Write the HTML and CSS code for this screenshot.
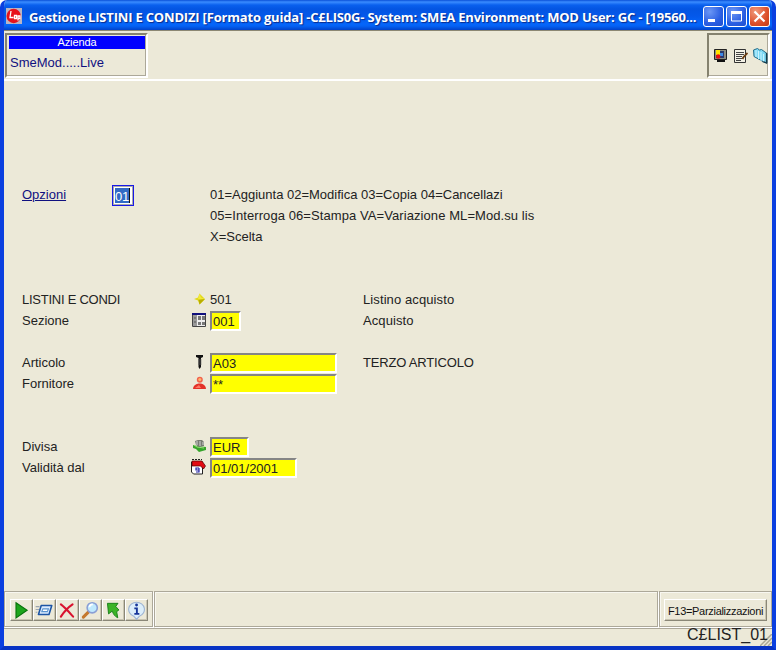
FILE: index.html
```html
<!DOCTYPE html>
<html lang="it">
<head>
<meta charset="utf-8">
<title>Gestione LISTINI E CONDIZI</title>
<link rel="stylesheet" href="styles.css">
</head>
<body>
<div class="window">
  <header class="titlebar">
    <svg class="app-icon" width="16" height="16" viewBox="0 0 16 16"><rect width="16" height="16" fill="#b9b5c4"/><circle cx="7.700" cy="8" r="7.200" fill="#e8121c"/><path d="M5 3L4 9.500h3.500M8.500 7.500h2v3h-2zM12 12.500V8h2v2.500h-2" stroke="#fff" stroke-width="1.300" fill="none"/></svg>
    <h1 class="title">Gestione LISTINI E CONDIZI [Formato guida] -C£LIS0G- System: SMEA Environment: MOD User: GC - [19560...</h1>
    <div class="controls">
      <span class="control"><svg width="19" height="19"><path d="M4 12h7v3H4z" fill="#fff"/></svg></span>
      <span class="control"><svg width="19" height="19"><path d="M4.500 5h10v9h-10z" fill="none" stroke="#fff"/><path d="M4 4h11v3H4z" fill="#fff"/></svg></span>
      <span class="control close"><svg width="19" height="19"><path d="M4.500 4.500l10 10M14.500 4.500l-10 10" stroke="#fff" stroke-width="2.200"/></svg></span>
    </div>
  </header>
  <section class="topbar">
    <div class="company">
      <div class="company-head">Azienda</div>
      <div class="company-name">SmeMod.....Live</div>
    </div>
    <div class="tools">
      <svg width="15" height="16" viewBox="0 0 15 16"><path d="M1.500 1.500h12v10h-12z" fill="#8b8c80" stroke="#222"/><path d="M3 3h8v7H3z" fill="#2d3b6c"/><path d="M3 2h4v5H3z" fill="#ffe600"/><path d="M7 5h3v3H7z" fill="#3d8be6"/><circle cx="5.200" cy="8.500" r="2.200" fill="#e81010"/><path d="M4 12h8v2H4z" fill="#111"/></svg>
      <svg width="15" height="16" viewBox="0 0 15 16"><path d="M1.500 1.500h11v13h-11z" fill="#f4f2e6" stroke="#333"/><path d="M3 4.500h8M3 6.500h8M3 8.500h6M3 10.500h6M3 12.500h5" stroke="#444"/><path d="M14.500 5l-4 4-1 2" stroke="#6b3d12" stroke-width="1.800" fill="none"/></svg>
      <svg width="15" height="16" viewBox="0 0 15 16"><path d="M.5 2l4-1.500 2 1.500 2-.5 5.500 4v9.500l-4-1.500-9-5z" fill="#7fd9f5" stroke="#246b87"/><path d="M3 2v7M5.500 3v8M8 4v9M10.500 6v8" stroke="#c9f3ff" fill="none"/><path d="M13.500 5v10l-4-1.500" stroke="#173c4d" stroke-width="1.300" fill="none"/></svg>
    </div>
  </section>
  <main class="form">
    <a class="label link">Opzioni</a>
    <div class="option"><span class="option-value">01</span></div>
    <div class="legend"><div>01=Aggiunta 02=Modifica 03=Copia 04=Cancellazi</div><div class="wide">05=Interroga 06=Stampa VA=Variazione ML=Mod.su lis</div><div>X=Scelta</div></div>

    <div class="label row6 caps">LISTINI E CONDI</div>
    <div class="icon row6"><svg width="16" height="16" viewBox="0 0 16 16"><path d="M8.500 2.500L14 8l-5.500 5.500-1.500-4L3 8l4-1.500z" fill="#e1d91a"/><path d="M8.500 2.500l1.500 4L14 8H7z" fill="#f2e93c"/><path d="M14 8l-5.500 5.500L7.500 9z" fill="#b9ae00"/></svg></div>
    <div class="value row6">501</div>
    <div class="desc row6">Listino acquisto</div>

    <div class="label row7">Sezione</div>
    <div class="icon row7"><svg width="16" height="16" viewBox="0 0 16 16"><path d="M1.500 1.500h13v13h-13z" fill="#eee" stroke="#444"/><path d="M1 1h14v2H1z" fill="#10107c"/><path d="M2 3h4v11H2z" fill="#999"/><path d="M3 5h2v2H3zM3 9h2v2H3zM7 4h3v4H7zM11 4h3v4h-3zM7 10h3v3H7zM11 10h3v3h-3z" fill="#777"/></svg></div>
    <div class="field w3 row7">001</div>
    <div class="desc row7">Acquisto</div>

    <div class="label row9">Articolo</div>
    <div class="icon row9"><svg width="16" height="16" viewBox="0 0 16 16"><path d="M5 1h7v2l-2 1v9l-1.500 2L7.500 13V4L5 3z" fill="#111"/><path d="M7 6h3.500M7 8h3.500M7 10h3.500" stroke="#555"/></svg></div>
    <div class="field w15 row9">A03</div>
    <div class="desc row9 caps">TERZO ARTICOLO</div>

    <div class="label row10">Fornitore</div>
    <div class="icon row10"><svg width="16" height="16" viewBox="0 0 16 16"><path d="M2 14c0-3 2-4.500 5.500-5.500h2.500C13 9.500 15 11 15 14z" fill="#e33128"/><path d="M4 13l4-3 2 3z" fill="#ff7763"/><circle cx="8.800" cy="4.800" r="3" fill="#f2624b"/><circle cx="8.800" cy="4.500" r="1.500" fill="#ffb46e"/></svg></div>
    <div class="field w15 row10">**</div>

    <div class="label row13">Divisa</div>
    <div class="icon row13"><svg width="16" height="16" viewBox="0 0 16 16"><path d="M2 7l4 1 9 1v3l-7 2-3-3-3-1z" fill="#36a52b"/><path d="M3 7l3 2 7 1" stroke="#9adf78" fill="none"/><path d="M4 3l3-1h4l2 2v4l-5 1-3-2z" fill="#777b72"/><path d="M6 3v4M9 3v5M12 4v3" stroke="#d5d5d5"/></svg></div>
    <div class="field w4 row13">EUR</div>

    <div class="label row14">Validità dal</div>
    <div class="icon row14 calendar"><svg width="16" height="16" viewBox="0 0 16 16"><path d="M1.500 3h11v12h-9l-2-2z" fill="#fff" stroke="#222"/><path d="M2 2h10l3.500 5-2 3-3-3H2z" fill="#e20b13" stroke="#4b0000" stroke-width=".7"/><path d="M2 .5h2M5 .5h2M8 .5h2M11 .5h1" stroke="#222"/><path d="M9 9H6v2h3V9v4H6" stroke="#2424a5" fill="none" stroke-width="1.200"/></svg></div>
    <div class="field w10 row14">01/01/2001</div>
  </main>
  <footer class="commands">
    <div class="panel buttons">
      <span class="btn"><svg width="20" height="20" viewBox="0 0 18 18"><path d="M4.500 2.500l10 6.800-10 6.800z" fill="#1ca51c" stroke="#08720c"/></svg></span>
      <span class="btn"><svg width="20" height="20" viewBox="0 0 18 18"><path d="M6.500 5h9.500l-2.500 8H4z" fill="#dcecff" stroke="#1c55a5" stroke-width="1.400" stroke-linejoin="round"/><path d="M8 8h5l-1 2.500H7z" fill="#fff" stroke="#5a94cf"/><path d="M1.500 6H5M1.500 8.500h3M1.500 11H3" stroke="#9aa4b0"/></svg></span>
      <span class="btn"><svg width="20" height="20" viewBox="0 0 18 18"><path d="M3.500 4c4 3 7 6.500 11 11M14 4C9.500 7 6.500 10.500 3.500 15" stroke="#d9132f" stroke-width="1.900" fill="none" stroke-linecap="round"/></svg></span>
      <span class="btn"><svg width="20" height="20" viewBox="0 0 18 18"><path d="M7.500 11l-4.500 4.500" stroke="#c5792d" stroke-width="2.800" stroke-linecap="round"/><circle cx="11" cy="7" r="4.600" fill="#bfe9fd" stroke="#8a9fd5" stroke-width="1.400"/><path d="M8.500 6.500c0-2 1.500-2.500 3-2.500" stroke="#fff" fill="none" stroke-width="1.500"/></svg></span>
      <span class="btn"><svg width="20" height="20" viewBox="0 0 18 18"><path d="M4 3h9.500l-2 2.800 2.800 3.200-2 1.500 1 5.500c-2.500-1-4-3.200-5-6L5 12.500z" fill="#3cb428" stroke="#127b16" stroke-width=".8"/></svg></span>
      <span class="btn"><svg width="20" height="20" viewBox="0 0 18 18"><path d="M9.500 2a7 6.500 0 0 1 2.500 12.600L9.500 17.500 7 14.600A7 6.500 0 0 1 9.500 2z" fill="#dceefa" stroke="#9db4d2"/><circle cx="9.500" cy="4.500" r="1.300" fill="#17369a"/><path d="M7.500 7.500h2.300v5M7.500 12.500h4.500" stroke="#17369a" stroke-width="1.700" fill="none"/></svg></span>
    </div>
    <div class="panel message"></div>
    <div class="panel keys"><span class="key">F13=Parzializzazioni</span></div>
  </footer>
  <div class="status"><svg class="grip" width="12" height="12"><path d="M0 12L12 0M4 12l8-8M8 12l4-4" stroke="#aaa794" stroke-width="1.500"/></svg><span class="code">C£LIST_01</span></div>
</div>
</body>
</html>
```
FILE: styles.css
```css
* { box-sizing: border-box; }
body { margin: 0; background: #fff; font-family: "Liberation Sans", Arial, sans-serif; font-size: 13px; color: #222; }
svg { display: block; flex: none; }
.window { width: 776px; height: 650px; display: flex; flex-direction: column; background: #ece9d8; border: solid #0a3fe0; border-width: 0 4px 4px; border-bottom-color: #0733c4; border-radius: 7px 7px 0 0; overflow: hidden; white-space: nowrap; }
.titlebar { height: 30px; flex: none; margin: 0 -4px; padding: 2px 6px 0; display: flex; align-items: center; background: linear-gradient(#0a50d8 0, #3a8cff 2px, #0a60ee 5px, #0455e2 9px, #0458ea 16px, #0566fb 24px, #0462f5 26px, #0142c9 30px); }
.title { flex: 1; margin: 1px 0 0 7px; font: bold 13px "Open Sans", "Noto Sans", sans-serif; letter-spacing: -.19px; color: #fff; text-shadow: 1px 1px 1px #0a2a8a; }
.controls { display: flex; gap: 2px; }
.control { width: 21px; height: 21px; border: 1px solid #fff; border-radius: 3px; background: radial-gradient(circle at 30% 25%, #6c97f5, #2a5ee2 60%, #1e4fd0); }
.close { background: radial-gradient(circle at 30% 25%, #f09a7c, #dc4f2a 60%, #c33c14); }
.topbar { height: 51px; flex: none; display: flex; justify-content: space-between; align-items: flex-start; padding: 2px 2px 0 0; border-top: 1px solid #8c8873; border-bottom: 2px solid #fff; }
.company { width: 143px; height: 45px; margin-left: 1px; border: 2px solid; border-color: #85826f #fff #fff #85826f; box-shadow: inset -1px -1px #aca899; padding: 1px 1px 1px 2px; }
.company-head { height: 13px; background: #00f; color: #fff; font-size: 11px; line-height: 13px; text-align: center; letter-spacing: -.1px; }
.company-name { margin: 6px 0 0 1px; line-height: 16px; color: #101080; }
.tools { width: 63px; height: 45px; border: 2px solid; border-color: #85826f #fff #fff #85826f; box-shadow: inset -1px -1px #aca899; display: flex; align-items: center; gap: 5px; padding-left: 4px; }
.form { flex: none; height: 510px; display: grid; padding: 103px 0 0 18px; grid-template-columns: 90px 78px 20px 153px 1fr; grid-template-rows: repeat(14, 21px); align-content: start; line-height: 21px; }
.label { grid-column: 1; }
.link { grid-row: 1; color: #101080; text-decoration: underline; }
.caps { letter-spacing: -.25px; }
.option { grid-column: 2; grid-row: 1; width: 22px; height: 21px; margin-top: 1px; border: 1px solid #1818e8; background: #fff; padding: 2px; box-shadow: inset 0 0 0 1px #aaa; }
.option-value { display: block; width: 15px; height: 15px; line-height: 17px; background: #316ac5; color: #fff; border-right: 1px solid #111; letter-spacing: -.3px; }
.legend { grid-column: 4 / 6; grid-row: 1 / 4; }
.wide { letter-spacing: .08px; }
.icon { grid-column: 3; padding-top: 2px; margin-left: 1px; }
.calendar { margin-left: 0; }
.value { grid-column: 4; }
.desc { grid-column: 5; letter-spacing: .1px; }
.desc.caps { letter-spacing: -.18px; }
.field { grid-column: 4; height: 20px; margin-top: 1px; padding-left: 1px; line-height: 18px; background: #ff0; border: 2px solid; border-color: #858585 #fff #fff #858585; }
.w3 { width: 31px; } .w4 { width: 39px; } .w10 { width: 87px; } .w15 { width: 127px; }
.row6 { grid-row: 6; } .row7 { grid-row: 7; } .row9 { grid-row: 9; } .row10 { grid-row: 10; } .row13 { grid-row: 13; } .row14 { grid-row: 14; }
.commands { height: 36px; flex: none; display: flex; gap: 1px; }
.panel { border: 1px solid #aca899; box-shadow: 1px 1px #fff, inset 1px 1px #f8f7f0; }
.buttons { width: 149px; display: flex; padding: 7px 0 0 5px; }
.btn { width: 23px; height: 22px; border: 1px solid; border-color: #fff #8a8777 #8a8777 #fff; box-shadow: inset -1px -1px #c9c5b2; }
.message { flex: 1; }
.keys { width: 113px; padding: 7px 0 0 4px; }
.key { display: block; width: 103px; height: 22px; border: 1px solid; border-color: #fff #8a8777 #8a8777 #fff; box-shadow: inset -1px -1px #c9c5b2; font-size: 11px; letter-spacing: -.3px; line-height: 22px; text-align: center; color: #111; }
.status { flex: 1; margin-top: 1px; border-top: 1px solid #aca899; display: flex; justify-content: flex-end; position: relative; }
.code { position: relative; font-size: 16px; line-height: 16px; margin: -2px 4px 0 0; }
.grip { position: absolute; right: 0; bottom: 0; }
```
